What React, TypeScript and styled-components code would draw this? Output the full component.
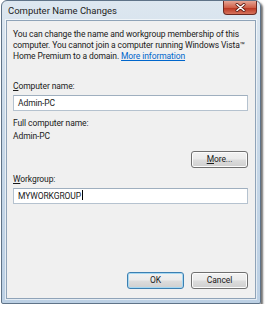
import styled, { createGlobalStyle } from "styled-components";

const Global = createGlobalStyle`
  body {
    margin: 0;
    background: #ffffff;
    font-family: Roboto, "Liberation Sans", sans-serif;
  }
`;

const Page = styled.div`
  padding: 0 0 0 1px;
`;

const Window = styled.div`
  width: 260px;
  height: 304px;
  box-sizing: border-box;
  border: 1px solid #5f7388;
  border-radius: 6px 6px 2px 2px;
  background: linear-gradient(180deg, #dde7f0 0%, #c9d9e8 40%, #bcd0e4 100%);
  box-shadow: 2px 2px 2px rgba(0, 0, 0, 0.55);
  display: flex;
  flex-direction: column;
`;

const TitleBar = styled.div`
  height: 19px;
  display: flex;
  align-items: flex-start;
  justify-content: space-between;
  padding-left: 6px;
`;

const Title = styled.span`
  font-size: 9.5px;
  color: #1e1e1e;
  line-height: 20px;
`;

const CloseButton = styled.div`
  width: 34px;
  height: 14px;
  margin-right: 3px;
  border: 1px solid #6b2a22;
  border-top: none;
  border-radius: 0 0 4px 4px;
  box-sizing: border-box;
  background: linear-gradient(180deg, #e6a595 0%, #d0614a 50%, #bb3722 55%, #d6735c 100%);
  display: flex;
  align-items: center;
  justify-content: center;
`;

const Client = styled.div`
  flex: 1;
  margin: 0 4px 4px 4px;
  border: 1px solid #8fa3b8;
  box-shadow: 0 0 0 1px rgba(255, 255, 255, 0.6);
  background: #f0f0f0;
  padding: 8px 7px 9px 6px;
  display: flex;
  flex-direction: column;
  font-size: 8.5px;
  letter-spacing: -0.1px;
  color: #1a1a1a;
`;

const Intro = styled.p`
  margin: 0;
  line-height: 11px;
  white-space: nowrap;
`;

const Link = styled.span`
  color: #0066cc;
  text-decoration: underline;
`;

const Label = styled.div<{ $top: number }>`
  margin-top: ${(p) => p.$top}px;
  line-height: 11px;
`;

const Key = styled.span`
  text-decoration: underline;
`;

const Input = styled.div`
  margin-top: 3px;
  height: 16px;
  box-sizing: border-box;
  border: 1px solid #b5c2cf;
  border-top-color: #9fafbf;
  background: #ffffff;
  padding-left: 4px;
  line-height: 14px;
`;

const Caret = styled.span`
  display: inline-block;
  width: 1px;
  height: 10px;
  background: #000;
  vertical-align: -1px;
  margin-left: 1px;
`;

const ButtonRow = styled.div<{ $top: number }>`
  display: flex;
  justify-content: flex-end;
  gap: 7px;
  margin-top: ${(p) => p.$top}px;
`;

const Button = styled.div<{ $default?: boolean }>`
  width: 57px;
  height: 17px;
  box-sizing: border-box;
  border: 1px solid ${(p) => (p.$default ? "#3c7fb1" : "#707070")};
  border-radius: 3px;
  background: linear-gradient(180deg, #f2f2f2 0%, #ebebeb 48%, #dddddd 52%, #cfcfcf 100%);
  box-shadow: ${(p) => (p.$default ? "inset 0 0 0 1px #a6d8f2" : "inset 0 0 0 1px #fcfcfc")};
  display: flex;
  align-items: center;
  justify-content: center;
  line-height: 15px;
`;

const Spacer = styled.div`
  flex: 1;
`;

export default function App() {
  return (
    <>
      <Global />
      <Page>
        <Window>
          <TitleBar>
            <Title>Computer Name Changes</Title>
            <CloseButton>
              <svg width="11" height="9" viewBox="0 0 11 9">
                <path d="M2 1.5 L9 7.5 M9 1.5 L2 7.5" stroke="#5a1a12" strokeWidth="3" strokeLinecap="round" />
                <path d="M2 1.5 L9 7.5 M9 1.5 L2 7.5" stroke="#ffffff" strokeWidth="1.6" strokeLinecap="round" />
              </svg>
            </CloseButton>
          </TitleBar>
          <Client>
            <Intro>
              You can change the name and workgroup membership of this
              <br />
              computer. You cannot join a computer running Windows Vista™
              <br />
              Home Premium to a domain. <Link>More information</Link>
            </Intro>
            <Label $top={19}>
              <Key>C</Key>omputer name:
            </Label>
            <Input>Admin-PC</Input>
            <Label $top={7}>Full computer name:</Label>
            <Label $top={2}>Admin-PC</Label>
            <ButtonRow $top={9}>
              <Button>
                <span>
                  <Key>M</Key>ore...
                </span>
              </Button>
            </ButtonRow>
            <Label $top={6}>
              <Key>W</Key>orkgroup:
            </Label>
            <Input>
              MYWORKGROUP
              <Caret />
            </Input>
            <Spacer />
            <ButtonRow $top={0}>
              <Button $default>OK</Button>
              <Button>Cancel</Button>
            </ButtonRow>
          </Client>
        </Window>
      </Page>
    </>
  );
}
